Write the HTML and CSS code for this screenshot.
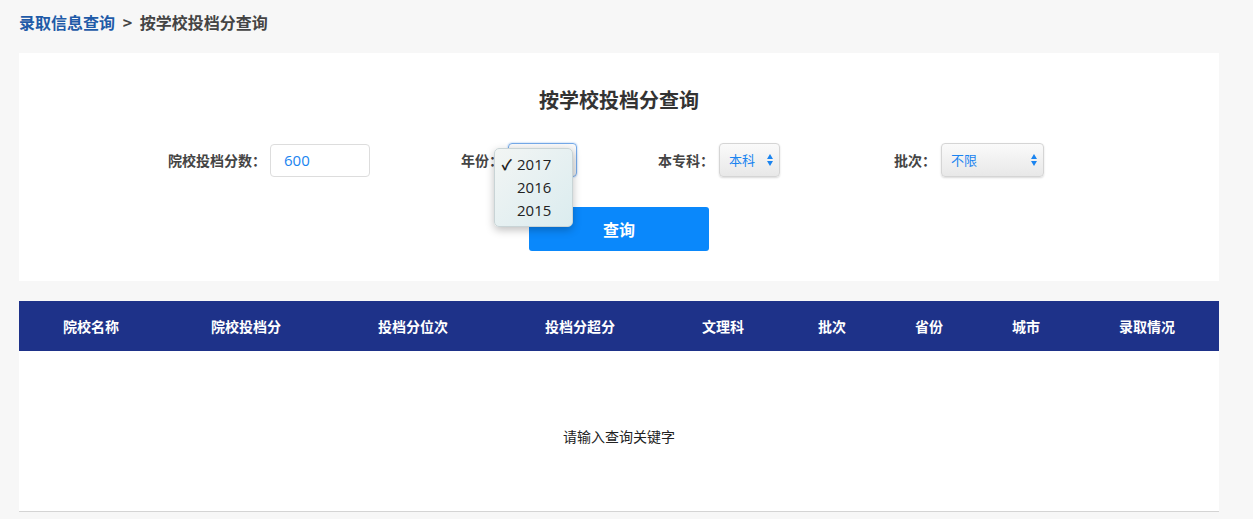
FILE: index.html
```html
<!DOCTYPE html>
<html lang="zh-CN">
<head>
  <meta charset="UTF-8" />
  <title>按学校投档分查询</title>
  <link rel="stylesheet" href="styles.css">
</head>
<body>
  <div class="crumb">
    <a href="#">录取信息查询</a>
    <span class="sep">&gt;</span>
    <span class="here">按学校投档分查询</span>
  </div>

  <div class="search-box">
    <h2>按学校投档分查询</h2>
    <div class="form-row">
      <div class="field f-score">
        <label>院校投档分数：</label>
        <input type="text" class="txt" value="600" />
      </div>
      <div class="field f-year">
        <label>年份：</label>
        <div class="sel sel-year focused"></div>
        <ul class="pop">
          <li class="on">2017</li>
          <li>2016</li>
          <li>2015</li>
        </ul>
      </div>
      <div class="field f-type">
        <label>本专科：</label>
        <div class="sel sel-type">本科<span class="arr"></span></div>
      </div>
      <div class="field f-batch">
        <label>批次：</label>
        <div class="sel sel-batch">不限<span class="arr"></span></div>
      </div>
    </div>
    <button class="btn-query">查询</button>
  </div>

  <div class="result">
    <div class="thead">
      <div>院校名称</div>
      <div>院校投档分</div>
      <div>投档分位次</div>
      <div>投档分超分</div>
      <div>文理科</div>
      <div>批次</div>
      <div>省份</div>
      <div>城市</div>
      <div>录取情况</div>
    </div>
    <div class="empty">请输入查询关键字</div>
  </div>
</body>
</html>
```

FILE: styles.css
```css
body {
  margin: 0;
  padding: 11px 19px 0;
  background: #f7f7f7;
  font-family: "Noto Sans CJK SC", "Liberation Sans", sans-serif;
  color: #333;
}
.crumb {
  font-size: 16px;
  font-weight: bold;
  line-height: 22px;
  color: #444;
}
.crumb a {
  color: #1f5ba8;
  text-decoration: none;
}
.crumb .sep {
  margin: 0 4px;
}
.search-box {
  width: 1200px;
  background: white;
  margin-top: 20px;
  height: 228px;
  box-sizing: border-box;
  padding-top: 33px;
  text-align: center;
}
.search-box h2 {
  margin: 0;
  font-size: 20px;
  line-height: 28px;
  color: #333;
}
.form-row {
  display: flex;
  margin-top: 29px;
  height: 34px;
  align-items: center;
}
.field {
  display: flex;
  align-items: center;
  position: relative;
}
.field label {
  font-size: 14px;
  font-weight: bold;
  color: #444;
  margin-right: 5px;
}
.f-score { margin-left: 149px; }
.f-score label { margin-right: 4px; }
.f-year { margin-left: 91px; }
.f-type { margin-left: 81px; }
.f-batch { margin-left: 114px; }
.txt {
  width: 100px;
  height: 33px;
  box-sizing: border-box;
  border: 1px solid #ddd;
  border-radius: 4px;
  padding: 0 13px;
  font-size: 15px;
  color: #1a84f0;
  font-family: "Open Sans", "Liberation Sans", sans-serif;
  outline: none;
}
.sel {
  position: relative;
  height: 34px;
  box-sizing: border-box;
  border: 1px solid #d5d5d5;
  border-radius: 4px;
  background: linear-gradient(#fafafa, #e8e8e8);
  box-shadow: 0 1px 2px rgba(0,0,0,0.15);
  font-size: 13px;
  color: #1a84f0;
  line-height: 32px;
  text-align: left;
  padding-left: 9px;
}
.sel-year { width: 69px; }
.sel-type { width: 61px; }
.sel-batch { width: 103px; }
.focused {
  border-color: #74a9e8;
  box-shadow: 0 0 2px #8bb8f0;
}
.arr {
  position: absolute;
  right: 5px;
  top: 10px;
  width: 7px;
  height: 12px;
}
.arr::before, .arr::after {
  content: "";
  position: absolute;
  left: 0;
  border-left: 3.5px solid transparent;
  border-right: 3.5px solid transparent;
}
.arr::before {
  top: 0;
  border-bottom: 5px solid #1a84f0;
}
.arr::after {
  bottom: 0;
  border-top: 5px solid #1a84f0;
}
.pop {
  position: absolute;
  left: 33px;
  top: 5px;
  width: 79px;
  margin: 0;
  padding: 4px 0;
  box-sizing: border-box;
  list-style: none;
  background: linear-gradient(135deg, #f2f5f4, #dbecef);
  border: 1px solid #c9d4d6;
  border-radius: 5px;
  box-shadow: 0 3px 8px rgba(0,0,0,0.25);
  text-align: left;
  z-index: 5;
}
.pop li {
  font-family: "Open Sans", "Liberation Sans", sans-serif;
  font-size: 15px;
  line-height: 23px;
  color: #222;
  padding-left: 22px;
  position: relative;
}
.pop li.on::before {
  content: "✓";
  position: absolute;
  left: 7px;
  font-size: 14px;
  font-weight: bold;
}
.btn-query {
  display: block;
  margin: 30px auto 0;
  width: 180px;
  height: 44px;
  border: none;
  border-radius: 3px;
  background: #0a88fb;
  color: white;
  font-size: 16px;
  font-weight: bold;
  font-family: inherit;
}
.result {
  width: 1200px;
  margin-top: 20px;
  background: white;
  border-bottom: 1px solid #d4d4d4;
}
.thead {
  display: grid;
  grid-template-columns: 144px 166px 168px 166px 120px 98px 96px 98px 144px;
  height: 50px;
  align-items: center;
  background: #1e3289;
  color: white;
  font-size: 14px;
  font-weight: bold;
  text-align: center;
}
.empty {
  height: 160px;
  display: flex;
  align-items: center;
  justify-content: center;
  padding-top: 10px;
  box-sizing: border-box;
  font-size: 14px;
  color: #222;
}
```
